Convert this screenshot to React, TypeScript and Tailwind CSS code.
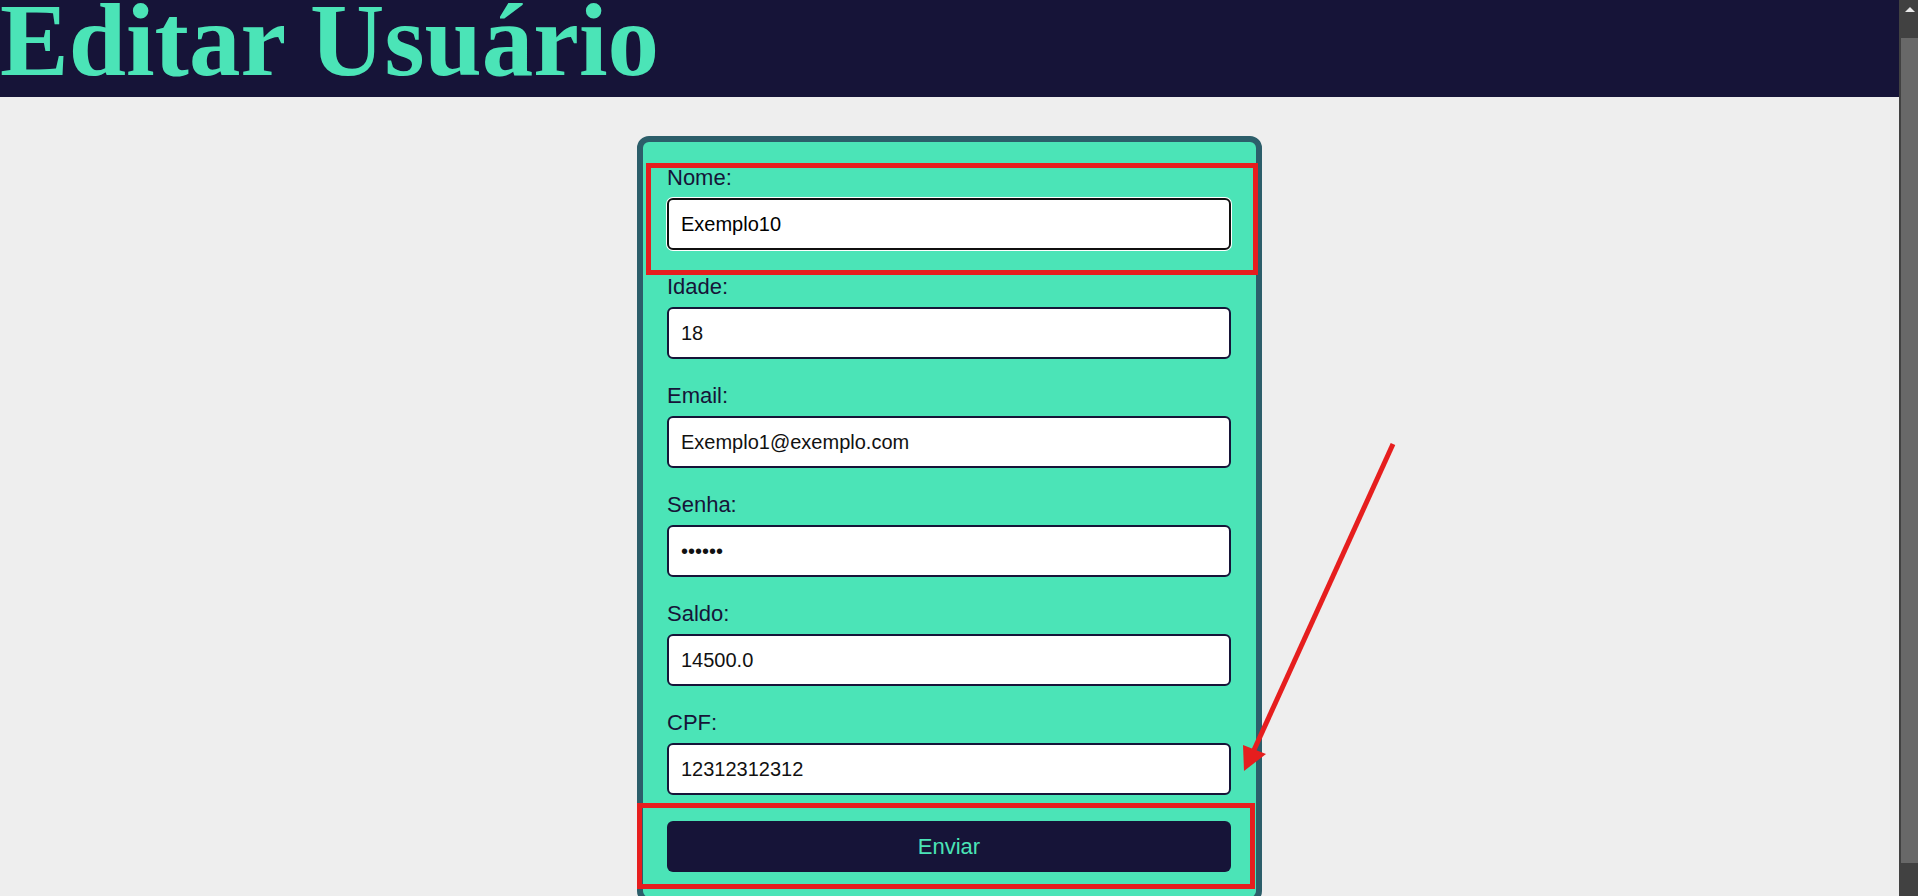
import React from "react";

interface fieldType {
  label: string;
  value: string;
  type?: string;
  focused?: boolean;
}

const fields: fieldType[] = [
  { label: "Nome:", value: "Exemplo10", focused: true },
  { label: "Idade:", value: "18" },
  { label: "Email:", value: "Exemplo1@exemplo.com" },
  { label: "Senha:", value: "123456", type: "password" },
  { label: "Saldo:", value: "14500.0" },
  { label: "CPF:", value: "12312312312" },
];

// fake scrollbar on the right edge
function ScrollBar() {
  return (
    <div className="flex h-full w-[19px] shrink-0 flex-col bg-[#414141]">
      <div className="flex h-[38px] items-start justify-center pl-[2px] pt-[6px]">
        <svg width="10" height="6" viewBox="0 0 10 6">
          <path d="M0 6 L5 1 L10 6 Z" fill="#e8e8e8" />
        </svg>
      </div>
      <div className="ml-[2px] h-[825px] bg-[#686868]" />
    </div>
  );
}

export default function App() {
  return (
    <div className="flex h-[896px] w-full overflow-hidden font-['Liberation_Sans',Arial,sans-serif]">
      <div className="relative flex-1 overflow-hidden bg-[#eeeeee]">
        <header className="h-[97px] bg-[#161438] pt-[2px]">
          <h1 className="m-0 font-['Liberation_Serif','Times_New_Roman',serif] text-[103px] font-bold leading-[76px] whitespace-nowrap text-[#4be4b7]">
            Editar Usuário
          </h1>
        </header>

        <form
          className="mx-auto mt-[39px] flex w-[625px] flex-col rounded-[12px] border-[6px] border-[#2c5e6a] bg-[#4be4b7] pb-[25px] pl-[24px] pr-[25px] pt-[23px]"
          onSubmit={(e) => e.preventDefault()}
        >
          {fields.map((f) => (
            <div key={f.label} className="mb-[24px] flex flex-col">
              <label className="mb-[8px] text-[22px] leading-[25px] text-[#161438]">
                {f.label}
              </label>
              <input
                type={f.type ?? "text"}
                defaultValue={f.value}
                className={
                  f.focused
                    ? "h-[52px] rounded-[6px] border-2 border-[#101010] bg-white px-[12px] text-[20px] text-black shadow-[0_0_0_1px_#ffffff] outline-none"
                    : "h-[52px] rounded-[6px] border-2 border-[#161438] bg-white px-[12px] text-[20px] text-[#111111] outline-none"
                }
              />
            </div>
          ))}
          <button
            type="submit"
            className="mt-[2px] h-[51px] rounded-[6px] bg-[#161438] text-[22px] text-[#4be4b7]"
          >
            Enviar
          </button>
        </form>

        {/* red annotations drawn over the page */}
        <div className="pointer-events-none absolute left-[646px] top-[163px] h-[112px] w-[612px] border-[5px] border-[#e61e1e]" />
        <div className="pointer-events-none absolute left-[637px] top-[803px] h-[86px] w-[618px] border-[5px] border-[#e61e1e]" />
        <svg
          className="pointer-events-none absolute left-0 top-0"
          width="1899"
          height="896"
        >
          <line
            x1="1393"
            y1="444"
            x2="1254"
            y2="750"
            stroke="#e61e1e"
            strokeWidth="5"
          />
          <polygon points="1244,771 1243,745 1266,754" fill="#e61e1e" />
        </svg>
      </div>
      <ScrollBar />
    </div>
  );
}
